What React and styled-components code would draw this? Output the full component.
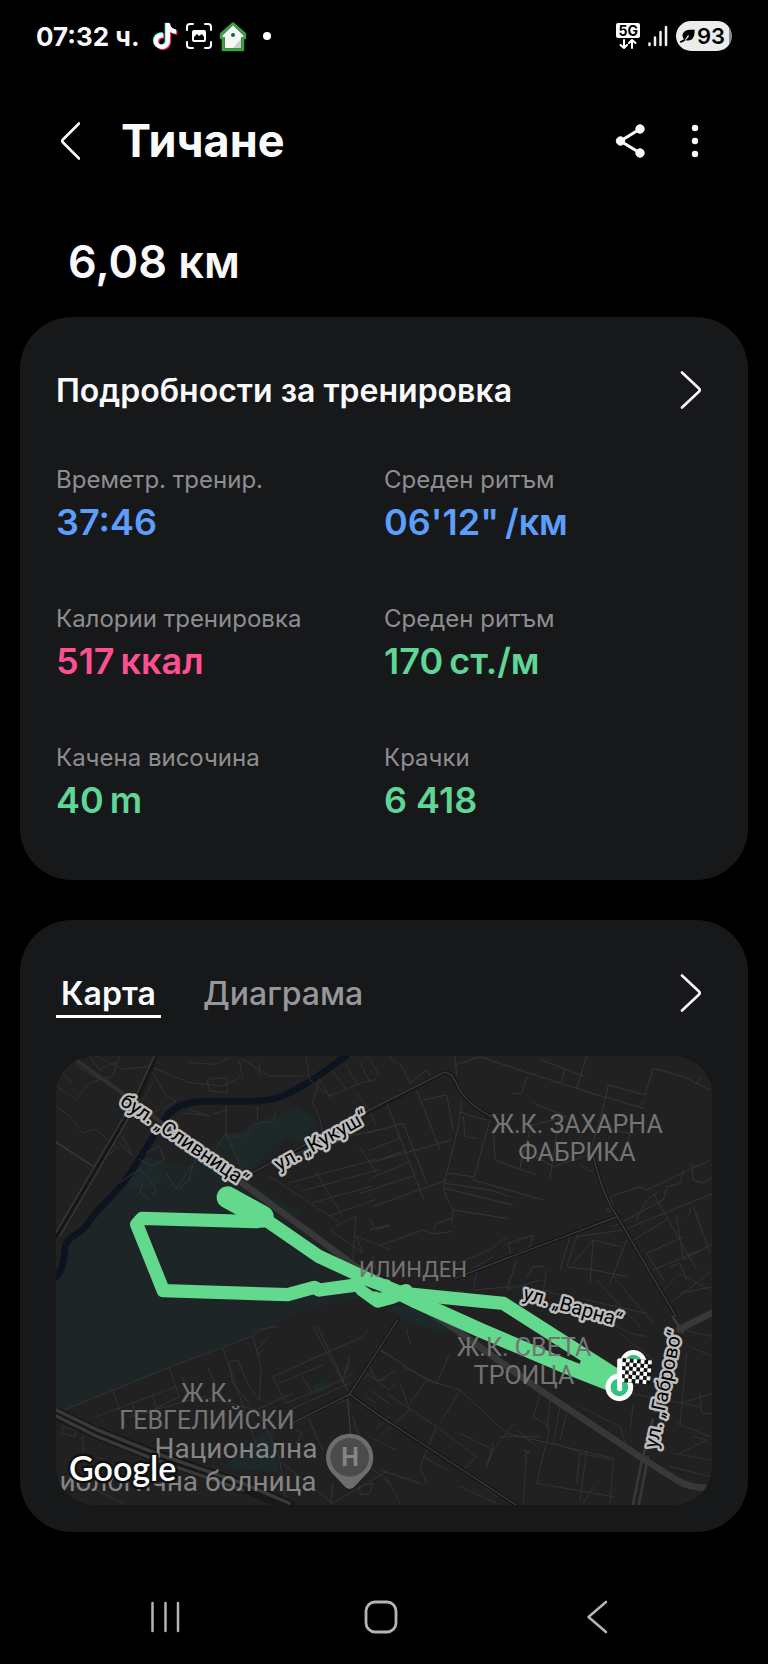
import React, { useState } from 'react';
import styled, { createGlobalStyle } from 'styled-components';

const GlobalStyle = createGlobalStyle`
  body {
    margin: 0;
    background: #000;
    color: #fafafc;
    font-family: Inter, "Noto Sans", sans-serif;
  }

  button {
    padding: 0;
    border: 0;
    background: none;
    color: inherit;
    font: inherit;
    cursor: pointer;
  }

  svg {
    display: block;
  }
`;

const Screen = styled.div`
  display: flex;
  flex-direction: column;
  min-height: 100vh;
`;

const StatusBar = styled.div`
  display: flex;
  align-items: center;
  justify-content: space-between;
  height: 72px;
  padding: 0 36px;
`;

const StatusGroup = styled.div`
  display: flex;
  align-items: center;
  gap: ${props => props.$gap}px;
`;

const Clock = styled.span`
  margin-right: 4px;
  font-size: 26px;
  font-weight: 700;
`;

const Dot = styled.span`
  width: 8px;
  height: 8px;
  margin-left: 9px;
  border-radius: 50%;
  background: #fff;
`;

const Network = styled.div`
  display: flex;
  flex-direction: column;
  align-items: center;
  gap: 1px;

  span {
    padding: 0 2px;
    border-radius: 2px;
    background: #fff;
    color: #000;
    font-size: 14px;
    font-weight: 700;
    line-height: 15px;
  }
`;

const Battery = styled.div`
  display: flex;
  align-items: center;
  gap: 2px;
  height: 30px;
  padding: 0 7px 0 4px;
  border-radius: 15px;
  background: linear-gradient(90deg, #ececec 94%, #8c8c8c 94%);
  color: #000;
  font-size: 22px;
  font-weight: 600;
`;

const Header = styled.header`
  display: flex;
  align-items: center;
  height: 138px;
  padding: 0 69px 0 60px;

  h1 {
    flex: 1;
    margin: 0 0 0 41px;
    font-size: 45px;
    font-weight: 700;
    line-height: 56px;
  }
`;

const HeaderActions = styled.div`
  display: flex;
  align-items: center;
  gap: 46px;
`;

const Distance = styled.p`
  margin: 0;
  padding: 24px 68px 27px;
  font-size: 45px;
  font-weight: 600;
  line-height: 56px;
`;

const Card = styled.section`
  margin: 0 20px ${props => (props.$last ? 0 : 40)}px;
  padding: 48px 36px ${props => (props.$last ? 27 : 58)}px;
  border-radius: 52px;
  background: #17181a;
`;

const CardHeader = styled.div`
  display: flex;
  align-items: center;
  justify-content: space-between;
  height: 50px;
  padding-right: 10px;

  h2 {
    margin: 0;
    font-size: 32px;
    font-weight: 600;
  }
`;

const Stats = styled.dl`
  display: grid;
  grid-template-columns: 1fr 1fr;
  row-gap: 59px;
  margin: 49px 0 0;
`;

const Stat = styled.div`
  display: flex;
  flex-direction: column;
  gap: 4px;

  dt {
    color: #8e8e91;
    font-size: 24px;
    line-height: 32px;
  }

  dd {
    display: flex;
    gap: 6px;
    margin: 0;
    color: ${props => props.$color};
    font-size: 36px;
    font-weight: 600;
    line-height: 44px;
  }
`;

const Tabs = styled.div`
  display: flex;
  gap: 42px;
`;

const Tab = styled.button`
  && {
    min-width: 105px;
    height: 50px;
    border-top: 3px solid transparent;
    border-bottom: 3px solid ${props => (props.$active ? '#fff' : 'transparent')};
    color: ${props => (props.$active ? '#fafafc' : '#97979a')};
    font-size: 32px;
    font-weight: ${props => (props.$active ? 600 : 500)};
  }
`;

const MapFrame = styled.div`
  overflow: hidden;
  margin-top: 38px;
  border-radius: 38px;
  background: #212121;

  svg {
    width: 100%;
    height: auto;
  }
`;

const AreaLabel = styled.text`
  fill: ${props => props.$fill || '#747474'};
  font-family: Roboto, sans-serif;
  font-size: ${props => props.$size || 25}px;
  text-anchor: middle;
`;

const StreetLabel = styled.text`
  fill: #000;
  stroke: #bcbcbc;
  stroke-width: 5px;
  stroke-linejoin: round;
  paint-order: stroke;
  font-family: Roboto, sans-serif;
  font-size: 20px;
`;

const MapBrand = styled.text`
  fill: #fff;
  stroke: #111;
  stroke-width: 5px;
  stroke-linejoin: round;
  paint-order: stroke;
  font-family: Lato, sans-serif;
  font-size: 34px;
  font-weight: 600;
`;

const NavBar = styled.nav`
  display: grid;
  grid-template-columns: repeat(3, 1fr);
  align-items: center;
  height: 94px;
  margin-top: auto;
  padding: 0 63px 0 57px;
  color: #b4b4b4;

  button {
    display: flex;
    justify-content: center;
  }
`;

const stats = [
  { label: 'Времетр. тренир.', value: ['37:46'], color: '#5d9efc' },
  { label: 'Среден ритъм', value: ['06\'12"', '/км'], color: '#5d9efc' },
  { label: 'Калории тренировка', value: ['517', 'ккал'], color: '#ff4f93' },
  { label: 'Среден ритъм', value: ['170', 'ст./м'], color: '#5fd695' },
  { label: 'Качена височина', value: ['40', 'm'], color: '#5fd695' },
  { label: 'Крачки', value: ['6 418'], color: '#5fd695' },
];

const tiktokPath = 'M12.525.02c1.31-.02 2.61-.01 3.91-.02.08 1.53.63 3.09 1.75 4.17 1.12 1.11 2.7 1.62 4.24 1.79v4.03c-1.44-.05-2.89-.35-4.2-.97-.57-.26-1.1-.59-1.62-.93-.01 2.92.01 5.84-.02 8.75-.08 1.4-.54 2.79-1.35 3.94-1.31 1.92-3.58 3.17-5.91 3.21-1.43.08-2.86-.31-4.08-1.03-2.02-1.19-3.44-3.37-3.65-5.71-.02-.5-.03-1-.01-1.49.18-1.9 1.12-3.72 2.58-4.96 1.66-1.44 3.98-2.13 6.15-1.72.02 1.48-.04 2.96-.04 4.44-.99-.32-2.15-.23-3.02.37-.63.41-1.11 1.04-1.36 1.75-.21.51-.15 1.07-.14 1.61.24 1.64 1.82 3.02 3.5 2.87 1.12-.01 2.19-.66 2.77-1.61.19-.33.4-.67.41-1.06.1-1.79.06-3.57.07-5.36.01-4.03-.01-8.05.02-12.07z';

const TiktokIcon = () => (
  <svg width="28" height="30" viewBox="-1 -1 26 26">
    <path d={tiktokPath} fill="#25f4ee" transform="translate(-.8 -.4)" />
    <path d={tiktokPath} fill="#fe2c55" transform="translate(1 1)" />
    <path d={tiktokPath} fill="#fff" />
  </svg>
);

const CaptureIcon = () => (
  <svg width="26" height="26" viewBox="0 0 26 26" fill="none">
    <path d="M1 7V4q0-3 3-3h3M19 1h3q3 0 3 3v3M25 19v3q0 3-3 3h-3M7 25H4q-3 0-3-3v-3" stroke="#fff" strokeWidth="2" strokeLinecap="round" />
    <rect x="6" y="7" width="14" height="12" rx="2" fill="#fff" />
    <path d="M8 17v-3l3-3 2 2 3-2 2 3v3z" fill="#000" />
  </svg>
);

const HouseIcon = () => (
  <svg width="28" height="31" viewBox="0 0 28 31">
    <path d="M14 2.500 26 13v4h-2v12H4V17H2v-4z" fill="#2f9147" stroke="#3f9d43" strokeWidth="2.500" strokeLinejoin="round" />
    <path d="M14 4.500 24.500 14.500v1.500H22V27H6V16H3.500v-1.500z" fill="#f6f6f6" />
    <path d="m22 18-8 9h8z" fill="#cfcfcf" />
    <circle cx="14" cy="14" r="2" fill="#1f5f33" />
  </svg>
);

const TrafficIcon = () => (
  <svg width="18" height="10" viewBox="0 0 18 10" fill="none" stroke="#fff" strokeWidth="2" strokeLinecap="round" strokeLinejoin="round">
    <path d="M5 1v8M1.500 6 5 9l3-3M13 9V1M10 4l3-3 3.500 3" />
  </svg>
);

const SignalIcon = () => (
  <svg width="20" height="22" viewBox="0 0 20 22" stroke="#f2f2f2" strokeWidth="2.500" strokeLinecap="round">
    <path d="M1.500 18.500v1.500M7 12.500V20M12.500 7v13M18 2v18" />
  </svg>
);

const LeafIcon = () => (
  <svg width="15" height="14" viewBox="0 0 15 14">
    <path d="M14.500.5c.5 4.500-.5 11-6.500 11-2.200 0-3.500-.8-4.500-1.800C2 7.500 2 4.500 4.500 2.500 7.500.2 11 1 14.500.5z" fill="#000" />
    <path d="M.8 12.800C3.500 12.500 7 9.500 8.500 6.500" fill="none" stroke="#ececec" strokeWidth="1.500" />
    <path d="M.8 12.800C2 12.500 3 12 4.500 11" fill="none" stroke="#000" strokeWidth="1.800" strokeLinecap="round" />
  </svg>
);

const BackIcon = () => (
  <svg width="20" height="38" viewBox="0 0 20 38" fill="none" stroke="#fafafc" strokeWidth="2.600" strokeLinecap="round" strokeLinejoin="round">
    <path d="M19 1.500 3 17.500q-1.500 1.500 0 3L19 36.500" />
  </svg>
);

const ShareIcon = () => (
  <svg width="30" height="34" viewBox="0 0 30 34" fill="#fafafc" stroke="#fafafc">
    <path d="M25 5 5.500 17 25 29" fill="none" strokeWidth="3" />
    <circle cx="25" cy="5" r="4.200" />
    <circle cx="5.500" cy="17" r="4.200" />
    <circle cx="25" cy="29" r="4.200" />
  </svg>
);

const MoreIcon = () => (
  <svg width="8" height="34" viewBox="0 0 8 34" fill="#fafafc">
    <circle cx="4" cy="4" r="3.200" />
    <circle cx="4" cy="17" r="3.200" />
    <circle cx="4" cy="30" r="3.200" />
  </svg>
);

const ChevronIcon = () => (
  <svg width="22" height="38" viewBox="0 0 22 38" fill="none" stroke="#fafafc" strokeWidth="2.600" strokeLinecap="round" strokeLinejoin="round">
    <path d="m2 1.500 17 16q1.500 1.500 0 3L2 36.500" />
  </svg>
);

// white squares of the chequered finish flag
const flagCells = [];
for (let row = 0; row < 6; row++) {
  for (let col = 0; col < 8; col++) {
    if ((row + col) % 2 === 1) flagCells.push([col, row]);
  }
}

const RouteMap = () => (
  <svg viewBox="0 0 656 449" role="img" aria-label="Маршрут">
    <g transform="scale(.33333)" fill="none" strokeLinejoin="round" strokeLinecap="round">
      {/* park and green areas */}
      <path fill="#1d2526" d="M0 680 30 560 110 480 190 390 260 300 330 320 400 330 490 250 580 225 600 200 660 190 720 150 770 180 795 215 740 270 690 240 600 330 570 370 740 470 700 500 900 640 930 720 730 772 590 837 340 932 35 1057 0 1072z" />
      <path fill="#1c2b2c" opacity=".5" d="M500 240 590 215 600 200 720 150 780 190 740 250 690 235 570 350zM190 390 260 300 330 320 320 380 260 400z" />
      <path fill="#1c2829" d="M1002 752 1062 745 1190 820 1170 830 1040 795zM765 990 815 970 828 990 780 1015zM620 1130 650 1120 672 1250 500 1235z" />

      {/* river */}
      <path stroke="#0d1420" strokeWidth="20" d="M870 0C800 50 740 95 680 120S520 132 430 137 330 180 250 310 150 420 90 510C60 545 30 540 26 580S20 650 -10 670" />

      {/* small streets, top left */}
      <g stroke="#333" strokeWidth="3">
        <path d="M0 90 60 130 100 80 170 60 190 0M100 0 130 40 180 20M60 30 150 80M0 150 40 180 80 230 120 220 190 280M0 70 20 50 50 80M0 260 110 330 180 280M190 130 250 150 290 80M290 35 400 80 500 90 560 60 550 15M290 50 330 120 360 135 320 160M455 70 510 65 515 110 460 105zM560 10 640 60 740 60M610 20 612 60M380 170 460 180 400 160M510 150 510 230 480 280M470 175 510 160M605 150 605 190M510 230 540 300 560 350M510 240 570 240 590 205 650 195 660 165M120 0 200 40 290 30M400 20 480 25 520 5" />
        <path d="M200 240 230 300 190 260M270 290 310 270 325 310 290 330 250 310M190 380 250 340 280 370 300 400 290 420M260 380 250 410 280 430M330 350 360 400 400 340 420 310 450 330M370 400 400 370 410 330M280 180 310 160M420 270 440 300" />
        <path d="M750 0 760 70 830 130M790 70 820 120 920 80 960 70M830 45 870 100M870 30 905 85M910 15 940 75M940 5 970 60M790 70 770 140 790 180 800 230M900 110 940 160 960 210M620 340 680 310 900 220M640 360 850 500M690 330 880 240 970 220M700 380 960 310M740 405 970 340M770 440 950 390M820 480 960 430M840 510 900 480 890 610M780 350 860 480M910 270 960 350M940 490 960 520 1000 510M820 520 920 590 900 540 1000 580M950 600 960 640" />
      </g>

      {/* small streets, top right */}
      <g stroke="#353535" strokeWidth="3" transform="translate(972 -18)">
        <path d="M20 160 130 445M-40 250 70 220 140 400M-30 300 60 265M-30 340 80 300M-20 380 90 335M-60 430 110 375M-20 470 200 390M110 120 180 300M130 150 200 135 220 240M0 330 215 270M60 40 90 100 140 60 160 90M30 20 45 40M225 20 230 75M225 45 300 20 450 70 620 125 790 175M440 80 425 130 400 130M485 30 615 80M555 55 545 95M620 20 590 115M685 105 795 135 820 55 910 80 990 120M685 105 665 190 635 290M795 150 780 165M950 100 960 85" />
        <path d="M245 155 235 230 190 410Q195 440 220 480L215 520M240 185 280 200 320 210M250 200 255 260 290 265M330 210 280 390 490 450M280 380 205 370M340 240 345 330 470 375M450 240 420 355 430 300 520 350 640 310M460 160 560 200 440 230M540 185 510 385M195 400 330 420 390 440M195 415 400 465M220 480 380 505M600 340 625 365 650 355M670 190 700 240 750 250 740 290" />
        <path d="M0 585 130 540 160 552 215 545M160 540 170 520 215 505M230 640 330 600 380 560M385 580 460 555 450 590 395 615zM-30 540 25 525M255 670 340 620M410 630 380 720M440 680 460 650 490 650M570 560 540 660M600 530 560 650 640 660 740 680M590 560 730 540M580 640 640 570 720 590M640 570 630 700M740 570 690 700M700 470 690 440 780 410 800 420 990 330M830 430 800 450 770 510M730 540 1000 430M760 570 860 510M820 430 950 660M890 500 910 630 1000 580M910 360 900 400 860 410 850 450 700 530M935 340 940 390 970 400 1000 380M800 610 910 560M800 610 850 690M820 660 960 600M870 650 900 640 920 690M940 470 990 610M920 500Q935 490 930 475M680 480Q690 465 692 485z" />
      </g>

      {/* small streets, bottom left */}
      <g stroke="#333" strokeWidth="3" transform="translate(0 642)">
        <path d="M0 430 340 292 500 232 590 198 610 180 665 168M170 360 210 470M340 292 370 380 270 430M500 232 600 520M590 198 615 290 610 390 580 350 545 270 520 275 530 340 580 400M600 240 640 200M605 255 625 235M455 290 480 350M380 320 390 370M120 440 360 350M220 440 440 380 600 420 710 370M290 380 320 470M230 400 245 480M650 320 690 400M650 320 920 200 935 180M670 340 800 285M690 400 860 330 880 280M700 420 880 340M740 320 770 370M770 170 880 370M785 170 865 340M790 200 805 190M615 440 670 560 690 700M700 470 760 440M760 450 800 540M860 330 890 310M960 480 1000 440M890 440 910 500M930 380 960 400M680 580 830 700 1000 600M720 520 740 490 720 480M20 470 60 480 55 500 20 490zM80 500 85 600M0 640 120 660 200 700M120 560 210 600M830 640 825 700M870 540 980 620 1000 640M910 650 950 640 940 670 915 675z" />
        <path d="M920 300 1000 360 1020 340M940 290 960 330 990 330M970 240 1020 270M880 260 860 330M940 500 1020 540M780 420 870 390M920 330 950 300M940 360 1000 400" />
      </g>

      {/* small streets, bottom right */}
      <g stroke="#333" strokeWidth="3" transform="translate(972 642)">
        <path d="M-10 230 140 330 240 360 380 490 510 520 700 565M0 330 50 300M80 180 90 220M20 370 170 470 290 560 250 600 350 680M140 330 90 400M210 250 170 340 70 290M240 360 180 460M240 490 340 540 320 590M340 540 400 460M480 370 460 440 510 470 470 640 700 680M510 390 500 480M410 480 470 530M540 410 520 520 600 545 590 640M560 430 540 510M620 540 600 690M440 540 430 700M360 500 480 500M600 550 700 570 690 700M430 540 450 550M430 560 450 540M20 620 60 700M0 600 120 640M170 470 120 590 140 640M130 560 200 600M320 590 340 520M640 130 750 190 800 200M620 90 800 130M650 30 780 170M700 20 820 160M720 190 820 270M750 370 960 410M920 250 900 460M960 370 965 430 1000 430M880 550 990 570M890 460 990 500M930 230 1000 260M900 400 1000 370M940 500 980 510 900 550M870 590 990 620M760 400 750 480M230 60 400 130M380 60 480 30M290 0 280 60 400 50M500 0 490 60 560 80M60 340 90 420 0 500M600 410 720 470 740 530M640 650 610 700M240 650 350 700" />
        <path d="M850 60 900 10 990 60M900 70 1000 50M870 100 1000 0M910 180 1000 200" />
      </g>

      {/* larger streets */}
      <g stroke="#171717" strokeWidth="12">
        <path d="M0 540 250 120 300 0M590 350 972 150 1162 50Q1185 45 1200 80 1230 150 1330 192M1025 792 880 1015 700 1105M1194 668 1370 600 1684 482M1612 300Q1640 420 1684 482L1860 782M972 1080 1400 1360M880 1015 1000 1100" />
      </g>
      <g stroke="#3a3a3a" strokeWidth="4">
        <path d="M0 530 240 120 295 0M12 540 250 130M590 350 972 146 1162 50Q1185 45 1200 80 1230 150 1330 192M1025 792 880 1015 700 1105M1194 668 1370 600 1684 482M1612 300Q1640 420 1684 482L1860 782M972 1080 1400 1360M880 1015 1000 1100M875 1030 885 1150M0 258 110 330" />
      </g>
      <path stroke="#181818" strokeWidth="38" d="M0 1072 120 1130 300 1200 560 1290 700 1350" />
      <path stroke="#393939" strokeWidth="10" d="M0 1062 120 1120 300 1192 560 1282 700 1342M0 1080 120 1140 300 1212 560 1302" />
      <path stroke="#303030" strokeWidth="12" d="M60 12 200 112 560 382" />
      <path stroke="#383838" strokeWidth="20" d="M560 382 900 632 1172 802 1452 1002 1752 1202 1862 1272Q1910 1300 1968 1295M1800 1060 1850 850M1870 820 1980 765" />
      <path stroke="#383838" strokeWidth="8" d="M1760 1202 1730 1350M1776 1202 1748 1350M1790 1090 1762 1200M1850 782 1880 830" />

      {/* run route */}
      <g stroke="#62d98d" strokeWidth="40">
        <path d="M630 492 790 602 950 676 1040 712 1342 742 1690 964" />
        <path d="M1040 716 1072 732 1272 822 1532 932 1690 994" strokeWidth="44" />
        <path d="M605 497 258 487 242 505 322 704 695 716 775 694 790 702 910 686 990 690" />
        <path d="M918 700 965 734 1010 722 1050 705" strokeWidth="42" />
        <path d="M515 424 620 482" strokeWidth="66" />
        <path d="M1600 930 1690 975" strokeWidth="60" />
        <path d="M1690 950 1735 915" strokeWidth="34" />
      </g>
      <path fill="#1c1c1c" d="M924 688 978 708 950 706z" />
      <circle cx="1732" cy="922" r="33" fill="#2fc382" stroke="#fff" strokeWidth="14" />
      <circle cx="1690" cy="994" r="34" fill="#2fc382" stroke="#fff" strokeWidth="15" />
      <g transform="translate(1700 906) rotate(5)">
        <path fill="#111" d="M0 0h88v72H0z" />
        {flagCells.map(([col, row]) => (
          <rect key={`${col}-${row}`} x={col * 11} y={row * 12} width="11" height="12" fill="#fff" />
        ))}
      </g>
      <path stroke="#fff" strokeWidth="15" d="M1691 914v84" />

      {/* hospital pin */}
      <path fill="#6d6d6d" d="M881 1299Q872 1299 865 1290L826 1249A71 71 0 1 1 936 1249L897 1290Q890 1299 881 1299z" />
      <circle cx="881" cy="1204" r="58" fill="#4b4b4b" />
    </g>

    <AreaLabel x="521" y="77">Ж.К. ЗАХАРНА</AreaLabel>
    <AreaLabel x="521" y="105">ФАБРИКА</AreaLabel>
    <AreaLabel x="357" y="221" $size={22}>ИЛИНДЕН</AreaLabel>
    <AreaLabel x="468" y="300">Ж.К. СВЕТА</AreaLabel>
    <AreaLabel x="468" y="328">ТРОИЦА</AreaLabel>
    <AreaLabel x="151" y="346">Ж.К.</AreaLabel>
    <AreaLabel x="151" y="373">ГЕВГЕЛИЙСКИ</AreaLabel>
    <AreaLabel x="180" y="402" $size={28} $fill="#858585">Национална</AreaLabel>
    <AreaLabel x="132" y="435" $size={28} $fill="#858585">иологична болница</AreaLabel>
    <AreaLabel x="294" y="410" $fill="#858585" fontWeight="700">Н</AreaLabel>

    <StreetLabel transform="translate(63 48) rotate(34)">бул. „Сливница“</StreetLabel>
    <StreetLabel transform="translate(223 115) rotate(-29)">ул. „Кукуш“</StreetLabel>
    <StreetLabel transform="translate(466 243) rotate(16)">ул. „Варна“</StreetLabel>
    <StreetLabel transform="translate(601 393) rotate(-78)">ул. „Габрово“</StreetLabel>

    <MapBrand x="13" y="425">Google</MapBrand>
  </svg>
);

const App = () => {
  const [tab, setTab] = useState('map');

  return (
    <Screen lang="bg">
      <GlobalStyle />
      <StatusBar>
        <StatusGroup $gap={7}>
          <Clock>07:32 ч.</Clock>
          <TiktokIcon />
          <CaptureIcon />
          <HouseIcon />
          <Dot />
        </StatusGroup>
        <StatusGroup $gap={8}>
          <Network>
            <span>5G</span>
            <TrafficIcon />
          </Network>
          <SignalIcon />
          <Battery><LeafIcon />93</Battery>
        </StatusGroup>
      </StatusBar>

      <Header>
        <button aria-label="Назад"><BackIcon /></button>
        <h1>Тичане</h1>
        <HeaderActions>
          <button aria-label="Споделяне"><ShareIcon /></button>
          <button aria-label="Още опции"><MoreIcon /></button>
        </HeaderActions>
      </Header>

      <Distance>6,08 км</Distance>

      <Card>
        <CardHeader>
          <h2>Подробности за тренировка</h2>
          <button aria-label="Подробности"><ChevronIcon /></button>
        </CardHeader>
        <Stats>
          {stats.map(({ label, value, color }, i) => (
            <Stat key={i} $color={color}>
              <dt>{label}</dt>
              <dd>{value.map(part => <span key={part}>{part}</span>)}</dd>
            </Stat>
          ))}
        </Stats>
      </Card>

      <Card $last>
        <CardHeader>
          <Tabs role="tablist">
            <Tab role="tab" aria-selected={tab === 'map'} $active={tab === 'map'} onClick={() => setTab('map')}>Карта</Tab>
            <Tab role="tab" aria-selected={tab === 'chart'} $active={tab === 'chart'} onClick={() => setTab('chart')}>Диаграма</Tab>
          </Tabs>
          <button aria-label="Отваряне на картата"><ChevronIcon /></button>
        </CardHeader>
        <MapFrame>
          <RouteMap />
        </MapFrame>
      </Card>

      <NavBar>
        <button aria-label="Скорошни">
          <svg width="32" height="32" viewBox="0 0 32 32" stroke="currentColor" strokeWidth="2.500" strokeLinecap="round">
            <path d="M3.500 2v28M16.500 2v28M29 2v28" />
          </svg>
        </button>
        <button aria-label="Начало">
          <svg width="34" height="34" viewBox="0 0 34 34" fill="none" stroke="currentColor" strokeWidth="2.800">
            <rect x="2" y="2" width="30" height="30" rx="9" />
          </svg>
        </button>
        <button aria-label="Назад">
          <svg width="22" height="34" viewBox="0 0 22 34" fill="none" stroke="currentColor" strokeWidth="2.600" strokeLinecap="round" strokeLinejoin="round">
            <path d="M20 2 2.500 17 20 32" />
          </svg>
        </button>
      </NavBar>
    </Screen>
  );
};

export default App;
